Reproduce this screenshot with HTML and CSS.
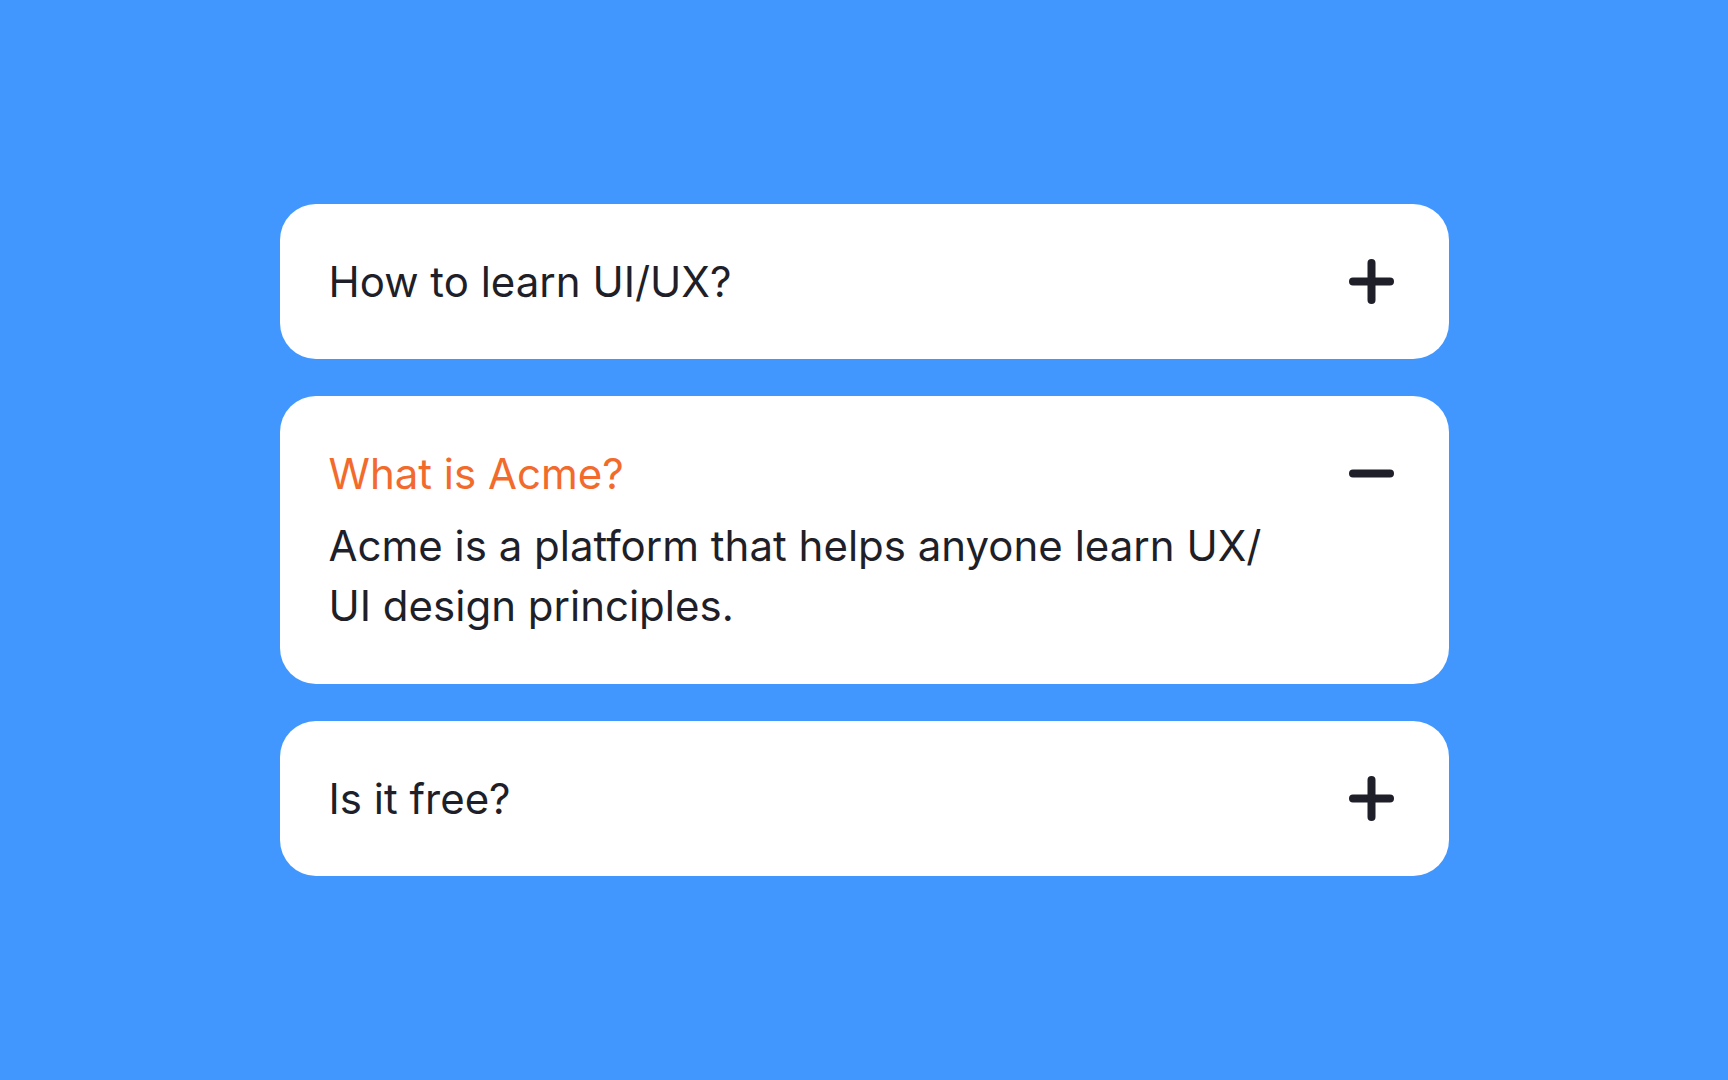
FILE: index.html
```html
<!DOCTYPE html>
<html lang="en">
<head>
    <meta charset="UTF-8">
    <meta name="viewport" content="width=device-width, initial-scale=1.0">
    <title>FAQ</title>
    <link rel="stylesheet" href="styles.css">
</head>
<body>
    <div class="faq-list">
        <div class="faq-item">
            <div class="faq-head">
                <h3 class="faq-question">How to learn UI/UX?</h3>
                <svg class="faq-icon" viewBox="0 0 45 45" aria-hidden="true">
                    <line x1="4" y1="22.5" x2="41" y2="22.5"/>
                    <line x1="22.5" y1="4" x2="22.5" y2="41"/>
                </svg>
            </div>
        </div>

        <div class="faq-item open">
            <div class="faq-head">
                <h3 class="faq-question">What is Acme?</h3>
                <svg class="faq-icon" viewBox="0 0 45 45" aria-hidden="true">
                    <line x1="4" y1="22.5" x2="41" y2="22.5"/>
                </svg>
            </div>
            <p class="faq-answer">Acme is a platform that helps anyone learn UX/<wbr>UI design principles.</p>
        </div>

        <div class="faq-item">
            <div class="faq-head">
                <h3 class="faq-question">Is it free?</h3>
                <svg class="faq-icon" viewBox="0 0 45 45" aria-hidden="true">
                    <line x1="4" y1="22.5" x2="41" y2="22.5"/>
                    <line x1="22.5" y1="4" x2="22.5" y2="41"/>
                </svg>
            </div>
        </div>
    </div>
</body>
</html>
```

FILE: styles.css
```css
body {
    margin: 0;
    min-height: 100vh;
    background-color: #4297fe;
    font-family: Inter, "Noto Sans", sans-serif;
    color: #1f1f29;
    display: flex;
    align-items: center;
    justify-content: center;
}
.faq-list {
    width: 1169px;
    display: flex;
    flex-direction: column;
    gap: 37px;
}
.faq-item {
    background-color: #fff;
    border-radius: 36px;
    padding: 52px 55px 52px 49px;
}
.faq-item.open {
    padding-bottom: 48px;
}
.faq-head {
    display: flex;
    align-items: center;
    justify-content: space-between;
}
.faq-question {
    margin: 0;
    font-size: 42px;
    font-weight: 400;
    line-height: normal;
}
.open .faq-question {
    color: #f26b2c;
}
.faq-icon {
    width: 45px;
    height: 45px;
    flex-shrink: 0;
    stroke: #1f1f29;
    stroke-width: 8;
    stroke-linecap: round;
}
.faq-answer {
    margin: 17px 0 0;
    max-width: 960px;
    font-size: 42px;
    line-height: 60px;
}
```
